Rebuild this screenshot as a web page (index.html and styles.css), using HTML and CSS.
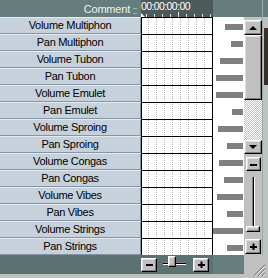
FILE: index.html
```html
<!DOCTYPE html>
<html lang="en">
<head>
    <meta charset="UTF-8">
    <title>Automation Tracks</title>
    <link rel="stylesheet" href="styles.css">
</head>
<body>
    <div class="window">
        <div class="head-names">
            <span>Comment</span>
            <span class="splitter"></span>
        </div>
        <div class="ruler">
            <span class="time">00:00:00:00</span>
            <div class="ticks">
                <span class="start"></span>
                <span class="tick"></span><span class="tick"></span><span class="tick"></span><span class="tick"></span>
                <span class="tick long"></span><span class="tick"></span><span class="tick"></span><span class="tick"></span><span class="tick"></span>
            </div>
        </div>
        <div class="head-rest"></div>
        <div class="edge"><div class="edge-dark"></div></div>

        <div class="names">
            <div class="name">Volume Multiphon</div>
            <div class="name">Pan Multiphon</div>
            <div class="name">Volume Tubon</div>
            <div class="name">Pan Tubon</div>
            <div class="name">Volume Emulet</div>
            <div class="name">Pan Emulet</div>
            <div class="name">Volume Sproing</div>
            <div class="name">Pan Sproing</div>
            <div class="name">Volume Congas</div>
            <div class="name">Pan Congas</div>
            <div class="name">Volume Vibes</div>
            <div class="name">Pan Vibes</div>
            <div class="name">Volume Strings</div>
            <div class="name">Pan Strings</div>
        </div>

        <div class="grid">
            <div class="grid-cols">
                <span></span><span></span><span></span><span></span>
                <span></span><span></span><span></span><span></span>
            </div>
            <div class="grid-rows">
                <span></span><span></span><span></span><span></span><span></span><span></span><span></span>
                <span></span><span></span><span></span><span></span><span></span><span></span><span></span>
            </div>
        </div>

        <div class="levels">
            <div class="level"><span class="bar" style="width:18px"></span></div>
            <div class="level"><span class="bar" style="width:12px"></span></div>
            <div class="level"><span class="bar" style="width:23px"></span></div>
            <div class="level"><span class="bar" style="width:27px"></span></div>
            <div class="level"><span class="bar" style="width:27px"></span></div>
            <div class="level"><span class="bar" style="width:11px"></span></div>
            <div class="level"><span class="bar" style="width:25px"></span></div>
            <div class="level"><span class="bar" style="width:16px"></span></div>
            <div class="level"><span class="bar" style="width:24px"></span></div>
            <div class="level"><span class="bar" style="width:19px"></span></div>
            <div class="level"><span class="bar" style="width:26px"></span></div>
            <div class="level"><span class="bar" style="width:16px"></span></div>
            <div class="level"><span class="bar" style="width:30px"></span></div>
            <div class="level"><span class="bar" style="width:16px"></span></div>
        </div>

        <div class="vscroll">
            <div class="raised arrow-btn up"><span class="arrow-up"></span></div>
            <div class="raised thumb"></div>
            <div class="track"></div>
            <div class="raised arrow-btn down"><span class="arrow-down"></span></div>
            <div class="raised small-btn minus-btn">
                <svg width="7" height="7" viewBox="0 0 7 7"><rect x="0" y="3" width="7" height="2"/></svg>
            </div>
            <div class="vslider">
                <div class="vgroove"></div>
                <div class="raised vknob"></div>
            </div>
            <div class="raised small-btn plus-btn">
                <svg width="7" height="7" viewBox="0 0 7 7"><rect x="0" y="3" width="7" height="2"/><rect x="2.5" y="0.5" width="2" height="7"/></svg>
            </div>
        </div>

        <div class="foot-names"></div>
        <div class="zoom">
            <div class="raised small-btn">
                <svg width="7" height="7" viewBox="0 0 7 7"><rect x="0" y="3" width="7" height="2"/></svg>
            </div>
            <div class="hslider">
                <div class="hgroove"></div>
                <div class="raised hknob"></div>
            </div>
            <div class="raised small-btn">
                <svg width="7" height="7" viewBox="0 0 7 7"><rect x="0" y="3" width="7" height="2"/><rect x="2.5" y="0.5" width="2" height="7"/></svg>
            </div>
        </div>
        <div class="foot-rest"></div>
        <div class="corner">
            <svg width="13" height="13" viewBox="0 0 13 13">
                <path d="M12 1 L1 12 M12 5 L5 12 M12 9 L9 12" stroke="#808080" stroke-width="1.2"/>
                <path d="M12 2 L2 12 M12 6 L6 12 M12 10 L10 12" stroke="#ffffff" stroke-width="0.8"/>
            </svg>
        </div>
        <div class="foot-strip"></div>
    </div>
</body>
</html>
```

FILE: styles.css
```css
:root {
    --panel: #657d7d;
    --panel-dark: #4d5a5a;
    --foot: #5c7272;
    --face: #c0c0c0;
    --shadow: #808080;
}

* {
    box-sizing: border-box;
}

body {
    margin: 0;
    background: var(--face);
    font-family: "Liberation Sans", Arial, sans-serif;
}

.window {
    display: grid;
    grid-template-columns: 141px 72px 31px 18px 6px;
    grid-template-rows: 17px 238px 19px 4px;
    width: 268px;
    height: 278px;
    overflow: hidden;
}

/* header */
.head-names {
    grid-column: 1;
    grid-row: 1;
    background: var(--panel);
    color: #eef2f2;
    font-size: 11px;
    letter-spacing: -0.2px;
    display: flex;
    align-items: center;
    justify-content: flex-end;
    gap: 3px;
    padding-right: 4px;
}

.splitter {
    width: 4px;
    height: 6px;
    border-top: 1px solid #9fb0b0;
    border-bottom: 1px solid #9fb0b0;
    margin-top: 5px;
}

.ruler {
    grid-column: 2;
    grid-row: 1;
    background: var(--panel-dark);
    color: #fff;
    display: flex;
    flex-direction: column;
    justify-content: space-between;
}

.time {
    font-size: 10.5px;
    letter-spacing: -0.6px;
    line-height: 11px;
    padding-top: 1px;
}

.ticks {
    display: flex;
    align-items: flex-end;
    height: 5px;
}

.ticks .start {
    width: 0;
    height: 0;
    border-left: 4px solid #fff;
    border-top: 4px solid transparent;
}

.tick {
    width: 1px;
    height: 3px;
    background: #e4e4e4;
    margin-left: 7px;
}

.ticks .start + .tick {
    margin-left: 1px;
}

.tick.long {
    height: 5px;
}

.head-rest {
    grid-column: 3 / 5;
    grid-row: 1;
    background: var(--panel);
}

.edge {
    grid-column: 5;
    grid-row: 1 / 3;
    background: linear-gradient(var(--panel) 0 17px, var(--face) 17px);
    border-left: 1px solid #9aa;
    display: flex;
    flex-direction: column;
    align-items: flex-end;
}

.edge-dark {
    margin-top: 28px;
    width: 4px;
    height: 57px;
    background: #3d2c2c;
}

/* track names */
.names {
    grid-column: 1;
    grid-row: 2;
    display: flex;
    flex-direction: column;
}

.name {
    height: 17px;
    background: #c7d1db;
    border-top: 1px solid #e4eaf0;
    border-bottom: 1px solid #8595a3;
    border-right: 1px solid #8595a3;
    font-size: 11px;
    letter-spacing: -0.3px;
    line-height: 15px;
    text-align: center;
    color: #000;
}

/* event grid */
.grid {
    grid-column: 2;
    grid-row: 2;
    display: grid;
    background: #fff;
    border-left: 1px solid #000;
    border-right: 1px solid #000;
}

.grid-cols,
.grid-rows {
    grid-area: 1 / 1;
}

.grid-cols {
    display: flex;
    padding-left: 6px;
}

.grid-cols span {
    width: 8px;
    border-left: 1px dotted #b4b4b4;
}

.grid-rows {
    display: flex;
    flex-direction: column;
}

.grid-rows span {
    height: 17px;
    flex-shrink: 0;
    border-top: 1px solid #000;
}

/* level bars */
.levels {
    grid-column: 3;
    grid-row: 2;
    background: #fff;
    display: flex;
    flex-direction: column;
    padding-right: 1px;
}

.level {
    height: 17px;
    flex-shrink: 0;
    display: flex;
    justify-content: flex-end;
    padding-top: 7px;
}

.bar {
    height: 6px;
    background: #808080;
}

/* win95 widgets */
.raised {
    background: var(--face);
    border: 1px solid;
    border-color: #fff #000 #000 #fff;
    box-shadow: inset -1px -1px var(--shadow), inset 1px 1px #dfdfdf;
}

.vscroll {
    grid-column: 4;
    grid-row: 2;
    background: var(--face);
    display: flex;
    flex-direction: column;
    align-items: center;
    padding-top: 3px;
}

.arrow-btn {
    width: 18px;
    height: 15px;
    display: flex;
    align-items: center;
    justify-content: center;
}

.arrow-btn.down {
    height: 14px;
}

.arrow-up {
    border-left: 4px solid transparent;
    border-right: 4px solid transparent;
    border-bottom: 4px solid #000;
}

.arrow-down {
    border-left: 4px solid transparent;
    border-right: 4px solid transparent;
    border-top: 4px solid #000;
}

.thumb {
    width: 18px;
    height: 65px;
}

.track {
    width: 18px;
    height: 40px;
    background: repeating-conic-gradient(#c0c0c0 0 25%, #fff 0 50%) 0 0 / 2px 2px;
}

.small-btn {
    width: 16px;
    height: 14px;
    display: flex;
    align-items: center;
    justify-content: center;
}

.minus-btn {
    margin-top: 3px;
    width: 15px;
}

.plus-btn {
    margin-top: 7px;
    height: 15px;
}

.vslider {
    margin-top: 6px;
    height: 55px;
    width: 14px;
    display: grid;
}

.vgroove,
.vknob {
    grid-area: 1 / 1;
}

.vgroove {
    justify-self: center;
    width: 3px;
    border-left: 1px solid var(--shadow);
    border-right: 1px solid #fff;
    background: #000;
    background-clip: content-box;
}

.vknob {
    align-self: end;
    height: 6px;
}

/* footer */
.foot-names {
    grid-column: 1;
    grid-row: 3;
    background: var(--foot);
}

.zoom {
    grid-column: 2;
    grid-row: 3;
    background: var(--foot);
    display: flex;
    align-items: center;
}

.hslider {
    margin: 1px 7px 0 6px;
    width: 23px;
    height: 11px;
    display: grid;
    align-self: flex-start;
}

.hgroove,
.hknob {
    grid-area: 1 / 1;
}

.hgroove {
    align-self: end;
    margin-bottom: 2px;
    height: 3px;
    border-top: 1px solid var(--shadow);
    border-bottom: 1px solid #fff;
    background: #000;
    background-clip: content-box;
}

.hknob {
    width: 8px;
    margin-left: 5px;
}

.foot-rest {
    grid-column: 3;
    grid-row: 3;
    background: #667e7e;
}

.corner {
    grid-column: 4 / 6;
    grid-row: 3 / 5;
    background: var(--face);
    display: flex;
    align-items: flex-end;
    justify-content: flex-end;
    padding: 0 2px 1px 0;
}

.foot-strip {
    grid-column: 1 / 4;
    grid-row: 4;
    background: var(--face);
}
```
